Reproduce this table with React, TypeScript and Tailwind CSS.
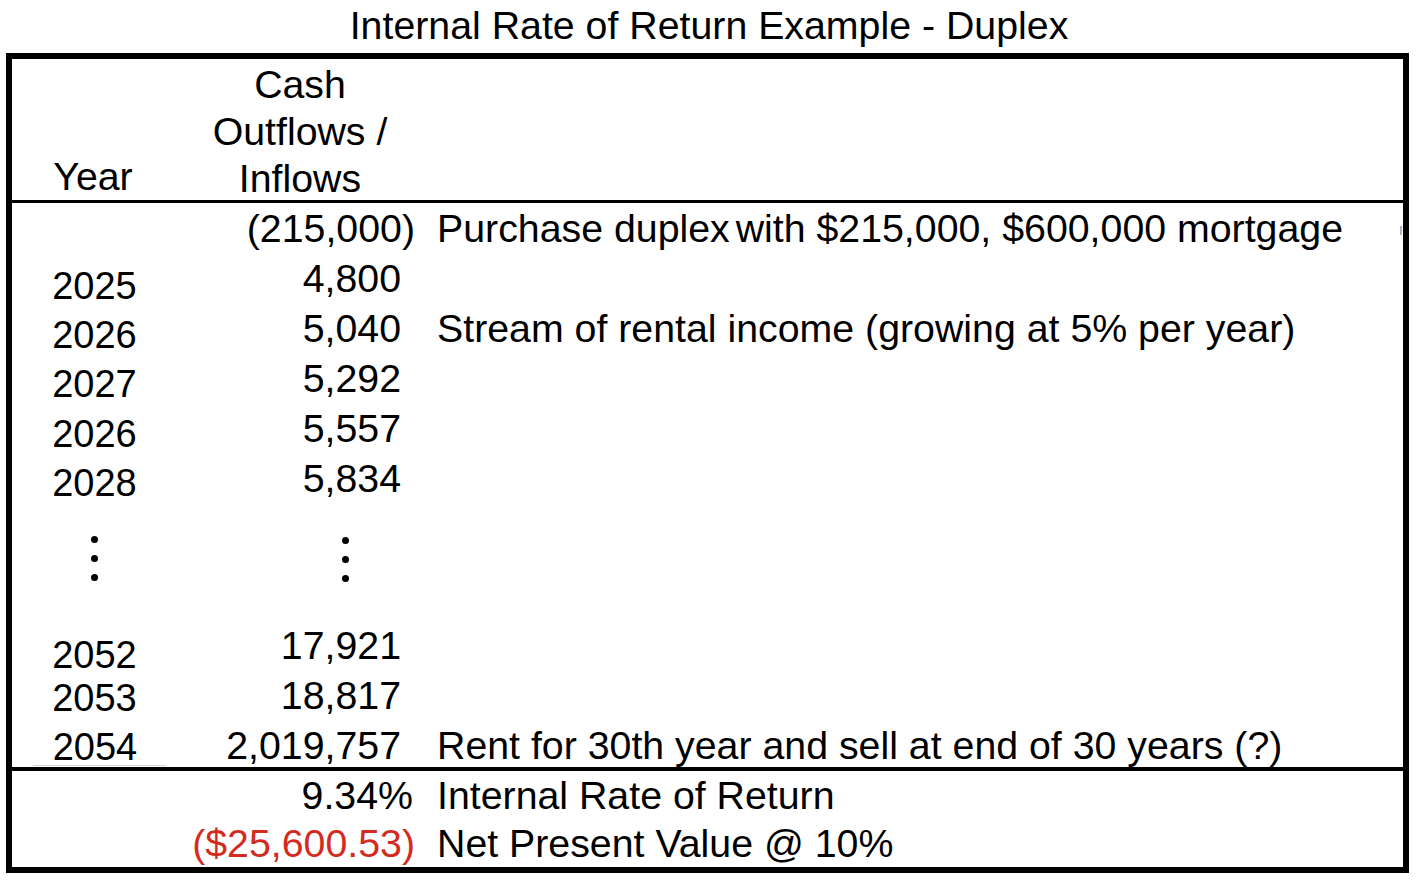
import * as React from 'react';

interface Row {
  year?: string;
  value: string;
  desc?: React.ReactNode;
  yearShift: string;
  valuePad: string;
}

const topRows: Row[] = [
  {
    value: '(215,000)',
    desc: (
      <>
        Purchase duplex<span className="ml-[-5px]"> with $215,000, $600,000 mortgage</span>
      </>
    ),
    yearShift: 'mt-0',
    valuePad: 'pr-0',
  },
  { year: '2025', value: '4,800', yearShift: 'mt-[8px]', valuePad: 'pr-[14px]' },
  { year: '2026', value: '5,040', desc: 'Stream of rental income (growing at 5% per year)', yearShift: 'mt-[7px]', valuePad: 'pr-[14px]' },
  { year: '2027', value: '5,292', yearShift: 'mt-[6px]', valuePad: 'pr-[14px]' },
  { year: '2026', value: '5,557', yearShift: 'mt-[6px]', valuePad: 'pr-[14px]' },
  { year: '2028', value: '5,834', yearShift: 'mt-[5px]', valuePad: 'pr-[14px]' },
];

const tailRows: Row[] = [
  { year: '2052', value: '17,921', yearShift: 'mt-[10px]', valuePad: 'pr-[14px]' },
  { year: '2053', value: '18,817', yearShift: 'mt-[3px]', valuePad: 'pr-[14px]' },
];

const Dots = () => (
  <div className="flex flex-col items-center gap-[12px]">
    <div className="w-[7px] h-[7px] rounded-full bg-black" />
    <div className="w-[7px] h-[7px] rounded-full bg-black" />
    <div className="w-[7px] h-[7px] rounded-full bg-black" />
  </div>
);

const DataRow = ({ row, first }: { row: Row; first?: boolean }) => (
  <div className="flex h-[50px] leading-[50px]">
    <div className={`w-[166px] shrink-0 text-center text-[38px] pr-[1px] ${row.yearShift}`}>{row.year}</div>
    <div className={`w-[237px] shrink-0 text-right whitespace-nowrap ${row.valuePad}`}>{row.value}</div>
    <div className="ml-[22px] flex-1 whitespace-nowrap">{row.desc}</div>
    {first && <div className="w-[2px] h-[9px] mt-[23px] mr-[1px] bg-[#a9b4c8]" />}
  </div>
);

export default function App() {
  return (
    <div className="w-[1418px] h-[887px] bg-white text-black text-[39.3px] font-['Liberation_Sans',Arial,sans-serif] overflow-hidden">
      <div className="h-[53px] pb-[3px] flex items-center justify-center whitespace-nowrap">
        Internal Rate of Return Example - Duplex
      </div>

      <div className="ml-[6px] w-[1403px] h-[820px] border-[6px] border-black">
        {/* header */}
        <div className="flex h-[141px] pt-[2px] leading-[47px]">
          <div className="w-[166px] shrink-0 flex flex-col justify-end text-center pr-[4px]">
            <span className="h-[47px]">Year</span>
          </div>
          <div className="w-[237px] shrink-0 flex flex-col text-center pl-[7px] whitespace-nowrap">
            <span>Cash</span>
            <span>Outflows /</span>
            <span>Inflows</span>
          </div>
        </div>
        <div className="h-[3px] bg-black" />

        {topRows.map((row, i) => (
          <DataRow key={i} row={row} first={i === 0} />
        ))}

        {/* skipped years */}
        <div className="flex h-[117px]">
          <div className="w-[166px] shrink-0 flex justify-center pt-[33px] pr-[1px]">
            <Dots />
          </div>
          <div className="w-[237px] shrink-0 flex justify-end pt-[34px] pr-[66px]">
            <Dots />
          </div>
        </div>

        {tailRows.map((row, i) => (
          <DataRow key={i} row={row} />
        ))}

        <div className="flex h-[47px] leading-[50px]">
          <div className="w-[166px] shrink-0 pl-[21px] pr-[12px]">
            <div className="h-[46px] border-b border-[#d4d4d4] text-center text-[38px] pr-[9px] pt-[2px]">2054</div>
          </div>
          <div className="w-[237px] shrink-0 text-right pr-[14px]">2,019,757</div>
          <div className="ml-[22px] flex-1 whitespace-nowrap">Rent for 30th year and sell at end of 30 years (?)</div>
        </div>
        <div className="h-[4px] bg-black" />

        {/* summary */}
        <div className="flex h-[48px] leading-[48px]">
          <div className="w-[166px] shrink-0" />
          <div className="w-[237px] shrink-0 text-right pr-[2px]">9.34%</div>
          <div className="ml-[22px] flex-1 whitespace-nowrap">Internal Rate of Return</div>
        </div>
        <div className="flex h-[48px] leading-[48px]">
          <div className="w-[166px] shrink-0" />
          <div className="w-[237px] shrink-0 text-right text-[#d42b1e] whitespace-nowrap">($25,600.53)</div>
          <div className="ml-[22px] flex-1 whitespace-nowrap">Net Present Value @ 10%</div>
        </div>
      </div>
    </div>
  );
}
